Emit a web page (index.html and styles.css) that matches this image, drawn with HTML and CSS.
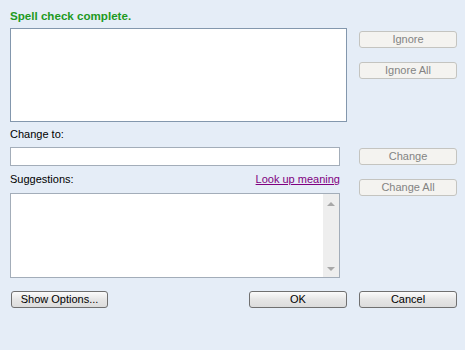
FILE: index.html
```html
<!DOCTYPE html>
<html lang="en">
<head>
    <meta charset="UTF-8">
    <title>Spelling</title>
    <link rel="stylesheet" href="styles.css">
</head>
<body>
    <div class="dialog">
        <div class="main">
            <div class="left">
                <div class="status">Spell check complete.</div>
                <div class="sentence"></div>
                <div class="label">Change to:</div>
                <div class="textbox"></div>
                <div class="label-row">
                    <span>Suggestions:</span>
                    <a href="#" class="link">Look up meaning</a>
                </div>
                <div class="listbox">
                    <div class="list-items"></div>
                    <div class="scrollbar">
                        <span class="arrow arrow-up"></span>
                        <span class="arrow arrow-down"></span>
                    </div>
                </div>
            </div>
            <div class="right">
                <button class="btn" disabled>Ignore</button>
                <button class="btn btn-pair" disabled>Ignore All</button>
                <button class="btn btn-change" disabled>Change</button>
                <button class="btn btn-pair" disabled>Change All</button>
            </div>
        </div>
        <div class="footer">
            <button class="btn btn-options">Show Options...</button>
            <button class="btn btn-ok">OK</button>
            <button class="btn">Cancel</button>
        </div>
    </div>
</body>
</html>
```

FILE: styles.css
```css
* {
    margin: 0;
    padding: 0;
    box-sizing: border-box;
}

body {
    font-family: "Liberation Sans", Arial, sans-serif;
    font-size: 11px;
    color: #000;
    background: #e5edf7;
    width: 465px;
    height: 350px;
    overflow: hidden;
}

.dialog {
    width: 457px;
    padding-left: 10px;
}

.main {
    display: flex;
    gap: 12px;
}

.left {
    width: 337px;
    display: flex;
    flex-direction: column;
}

.status {
    margin-top: 9px;
    line-height: 14px;
    font-size: 11.6px;
    font-weight: bold;
    color: #1f9a1f;
}

.sentence {
    margin-top: 5px;
    height: 94px;
    background: #fff;
    border: 1px solid #8397ad;
}

.label {
    margin-top: 6px;
    line-height: 13px;
}

.textbox {
    margin-top: 6px;
    width: 330px;
    height: 19px;
    background: #fff;
    border: 1px solid #a3adb9;
}

.label-row {
    margin-top: 7px;
    width: 330px;
    line-height: 13px;
    display: flex;
    justify-content: space-between;
}

.link {
    color: #800080;
    text-decoration: underline;
}

.listbox {
    margin-top: 7px;
    width: 330px;
    height: 85px;
    background: #fff;
    border: 1px solid #a3adb9;
    display: flex;
}

.list-items {
    flex: 1;
}

.scrollbar {
    width: 16px;
    background: #eeeeee;
    display: flex;
    flex-direction: column;
    justify-content: space-between;
    align-items: center;
    padding: 8px 0 6px;
}

.arrow {
    width: 0;
    height: 0;
    border-left: 4px solid transparent;
    border-right: 4px solid transparent;
}

.arrow-up {
    border-bottom: 4px solid #a8a8a8;
}

.arrow-down {
    border-top: 4px solid #a8a8a8;
}

.right {
    width: 98px;
    padding-top: 31px;
    display: flex;
    flex-direction: column;
}

.btn {
    width: 98px;
    height: 17px;
    font-family: inherit;
    font-size: 11px;
    line-height: 15px;
    color: #000;
    text-align: center;
    border: 1px solid #707070;
    border-radius: 3px;
    background: linear-gradient(#fbfbfb, #e6e6e6 50%, #dcdcdc);
}

.btn:disabled {
    color: #838383;
    border-color: #c4c4c0;
    background: #f4f3f0;
}

.btn-pair {
    margin-top: 14px;
}

.btn-change {
    margin-top: 69px;
}

.footer {
    margin-top: 13px;
    display: flex;
    gap: 12px;
}

.btn-options {
    margin-left: 1px;
    width: 97px;
}

.btn-ok {
    margin-left: auto;
}
```
